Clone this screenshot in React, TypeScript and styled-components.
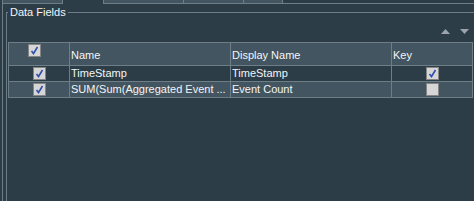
import React from 'react';
import styled, { createGlobalStyle } from 'styled-components';

const colors = {
  bg: '#2c3d47',
  raised: '#435560',
  line: '#6e7e87',
  text: '#f2f6f8',
  arrow: '#9aa4aa',
  boxFill: '#d6d6d6',
  boxBorder: '#858585',
  check: '#2f4fb0',
};

const GlobalStyle = createGlobalStyle`
  html, body {
    margin: 0;
    padding: 0;
    background: ${colors.bg};
  }
  body {
    font-family: "Liberation Sans", Arial, sans-serif;
    font-size: 11px;
    color: ${colors.text};
  }
`;

const Frame = styled.div`
  width: 474px;
  height: 201px;
  overflow: hidden;
  display: flex;
  flex-direction: column;
  background: ${colors.bg};
`;

const TabStrip = styled.div`
  display: flex;
  height: 4px;
  margin-left: 2px;
  flex-shrink: 0;
`;

const Tab = styled.div<{ $w: number; $active?: boolean }>`
  box-sizing: border-box;
  width: ${p => p.$w}px;
  height: 4px;
  border-left: 1px solid ${colors.line};
  border-bottom: ${p => (p.$active ? 'none' : `1px solid ${colors.line}`)};
  background: ${p => (p.$active ? colors.bg : colors.raised)};
`;

const TabFiller = styled.div`
  flex: 1;
  box-sizing: border-box;
  height: 4px;
  border-left: 1px solid ${colors.line};
  border-bottom: 1px solid ${colors.line};
`;

const Panel = styled.div`
  flex: 1;
  margin-left: 2px;
  border-left: 1px solid ${colors.line};
  padding: 2px 0 0 3px;
`;

const GroupBox = styled.fieldset`
  margin: 0;
  padding: 0;
  min-width: 0;
  height: 100%;
  box-sizing: border-box;
  border: 1px solid ${colors.line};
  border-right: none;
  border-bottom: none;
`;

const Legend = styled.legend`
  margin-left: 1px;
  padding: 0 2px;
  font-size: 11px;
  line-height: 13px;
  color: ${colors.text};
`;

const SortBar = styled.div`
  display: flex;
  justify-content: flex-end;
  align-items: flex-end;
  gap: 10px;
  height: 23px;
  box-sizing: border-box;
  padding: 0 5px 8px 0;
`;

const SortArrow: React.FC<{ dir: 'up' | 'down' }> = ({ dir }) => (
  <svg width="9" height="5" viewBox="0 0 9 5">
    <polygon
      points={dir === 'up' ? '4.5,0 9,5 0,5' : '0,0 9,0 4.5,5'}
      fill={colors.arrow}
    />
  </svg>
);

const Grid = styled.div`
  margin-left: 1px;
  width: 465px;
  box-sizing: border-box;
  border-left: 1px solid ${colors.line};
  border-top: 1px solid ${colors.line};
`;

type RowKind = 'header' | 'odd' | 'even';

const Row = styled.div<{ $kind: RowKind }>`
  display: grid;
  grid-template-columns: 61px 161px 161px 81px;
  height: ${p => (p.$kind === 'header' ? 23 : 16)}px;
  background: ${p => (p.$kind === 'odd' ? colors.bg : colors.raised)};
`;

const Cell = styled.div<{ $header?: boolean; $center?: boolean }>`
  box-sizing: border-box;
  border-right: 1px solid ${colors.line};
  border-bottom: 1px solid ${colors.line};
  display: flex;
  align-items: ${p => (p.$header ? 'flex-end' : 'center')};
  justify-content: ${p => (p.$center ? 'center' : 'flex-start')};
  padding: ${p => (p.$header ? '0 0 3px 1px' : '0 0 0 1px')};
  line-height: 13px;
  white-space: nowrap;
  overflow: hidden;
`;

const HeaderCheckCell = styled(Cell)`
  align-items: flex-start;
  padding: 1px 0 0 19px;
`;

const Box = styled.span`
  display: inline-flex;
  align-items: center;
  justify-content: center;
  box-sizing: border-box;
  width: 13px;
  height: 13px;
  background: ${colors.boxFill};
  border: 1px solid ${colors.boxBorder};
`;

const CheckBox: React.FC<{ checked: boolean }> = ({ checked }) => (
  <Box>
    {checked && (
      <svg width="9" height="9" viewBox="0 0 9 9">
        <path d="M1.5 5 L3.5 7.5 L7.5 1" stroke={colors.check} strokeWidth="1.6" fill="none" />
      </svg>
    )}
  </Box>
);

const fields = [
  { name: 'TimeStamp', display: 'TimeStamp', enabled: true, key: true },
  { name: 'SUM(Sum(Aggregated Event ...', display: 'Event Count', enabled: true, key: false },
];

export default function App() {
  return (
    <>
      <GlobalStyle />
      <Frame>
        <TabStrip>
          <Tab $w={60} />
          <Tab $w={41} $active />
          <Tab $w={80} />
          <Tab $w={60} />
          <Tab $w={39} />
          <TabFiller />
        </TabStrip>
        <Panel>
          <GroupBox>
            <Legend>Data Fields</Legend>
            <SortBar>
              <SortArrow dir="up" />
              <SortArrow dir="down" />
            </SortBar>
            <Grid>
              <Row $kind="header">
                <HeaderCheckCell>
                  <CheckBox checked />
                </HeaderCheckCell>
                <Cell $header>Name</Cell>
                <Cell $header>Display Name</Cell>
                <Cell $header>Key</Cell>
              </Row>
              {fields.map((f, i) => (
                <Row key={f.display} $kind={i % 2 === 0 ? 'odd' : 'even'}>
                  <Cell $center>
                    <CheckBox checked={f.enabled} />
                  </Cell>
                  <Cell>{f.name}</Cell>
                  <Cell>{f.display}</Cell>
                  <Cell $center>
                    <CheckBox checked={f.key} />
                  </Cell>
                </Row>
              ))}
            </Grid>
          </GroupBox>
        </Panel>
      </Frame>
    </>
  );
}
